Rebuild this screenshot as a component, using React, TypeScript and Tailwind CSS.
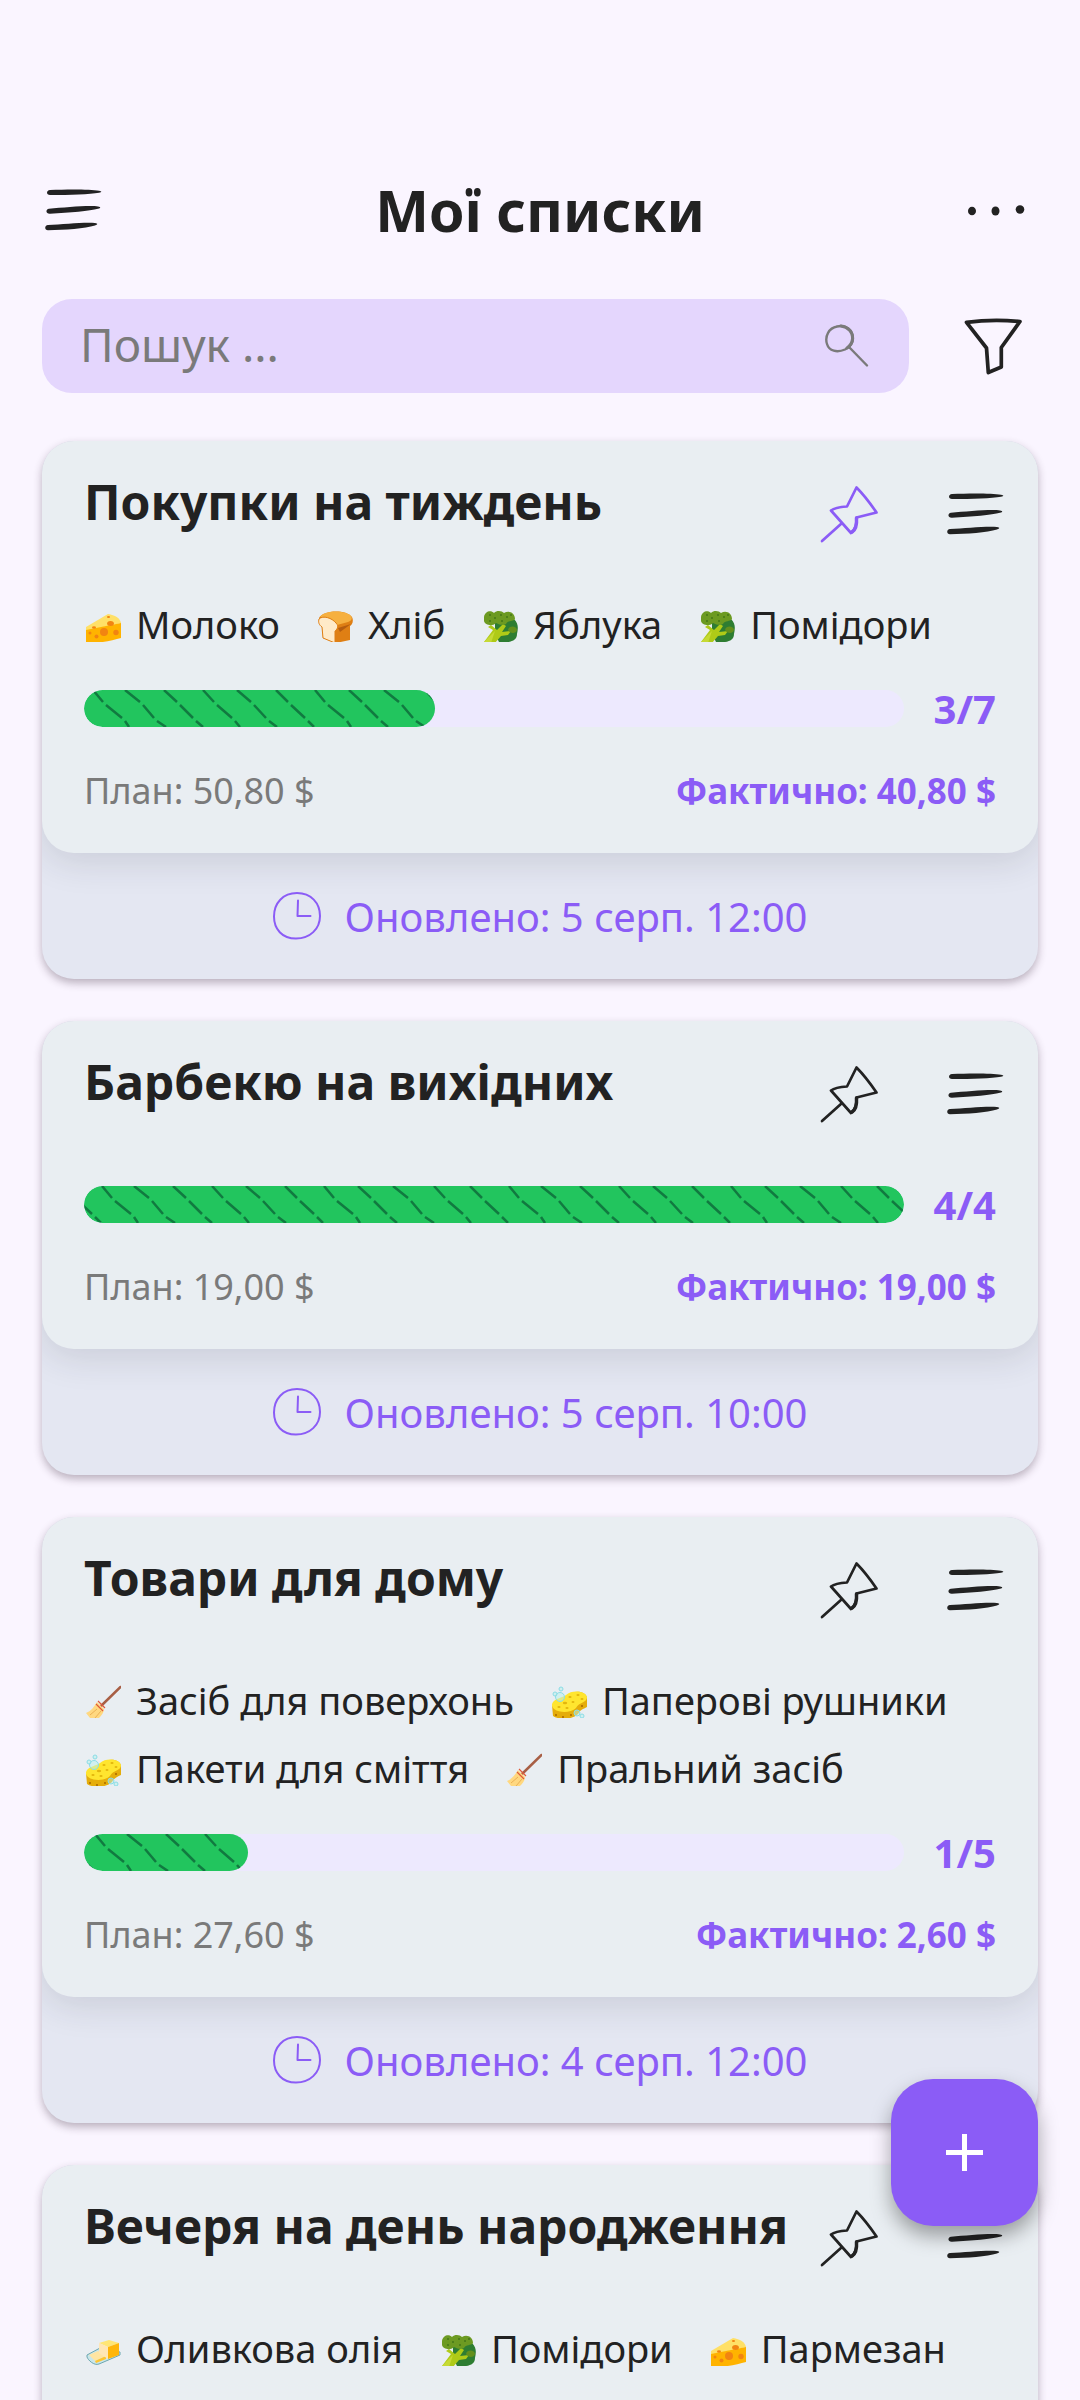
import type { ReactNode } from "react";

type FoodIcon = "cheese" | "bread" | "broccoli" | "broom" | "sponge" | "butter";

interface ListItem {
  icon: FoodIcon;
  name: string;
}

interface ListProgress {
  done: number;
  total: number;
  hatchStart: number;
  plan: string;
  actual: string;
  updated: string;
}

interface ShoppingList {
  title: string;
  pinned?: boolean;
  items: ListItem[];
  progress?: ListProgress;
}

const lists: ShoppingList[] = [
  {
    title: "Покупки на тиждень",
    pinned: true,
    items: [
      { icon: "cheese", name: "Молоко" },
      { icon: "bread", name: "Хліб" },
      { icon: "broccoli", name: "Яблука" },
      { icon: "broccoli", name: "Помідори" },
    ],
    progress: { done: 3, total: 7, hatchStart: 7, plan: "50,80 $", actual: "40,80 $", updated: "5 серп. 12:00" },
  },
  {
    title: "Барбекю на вихідних",
    items: [],
    progress: { done: 4, total: 4, hatchStart: 16, plan: "19,00 $", actual: "19,00 $", updated: "5 серп. 10:00" },
  },
  {
    title: "Товари для дому",
    items: [
      { icon: "broom", name: "Засіб для поверхонь" },
      { icon: "sponge", name: "Паперові рушники" },
      { icon: "sponge", name: "Пакети для сміття" },
      { icon: "broom", name: "Пральний засіб" },
    ],
    progress: { done: 1, total: 5, hatchStart: 9, plan: "27,60 $", actual: "2,60 $", updated: "4 серп. 12:00" },
  },
  {
    title: "Вечеря на день народження",
    items: [
      { icon: "butter", name: "Оливкова олія" },
      { icon: "broccoli", name: "Помідори" },
      { icon: "cheese", name: "Пармезан" },
    ],
  },
];

function MenuIcon() {
  return (
    <svg viewBox="0 0 57 42" className="w-[57px] h-[42px]" fill="currentColor" aria-hidden="true">
      <path d="M5 1C22 .3 45 .2 54 1.700C57 2.500 57 3 54 3.700C45 5.200 25 6 5 6C1 6 1 1.500 5 1Z" />
      <path d="M4 19.800C20 18.300 45 16 53 17.500C56 18 56 19 53 19.800C45 21.800 25 23.800 5 24.800C.5 25 .5 20.300 4 19.800Z" />
      <path d="M3 36C18 35.200 40 33 50 34C53 34.500 53 35.500 50 36.500C40 39.500 20 41 3 41.200C-.7 41 -.7 36.300 3 36Z" />
    </svg>
  );
}

function DotsIcon() {
  return (
    <svg viewBox="0 0 58 14" className="w-[58px] h-[14px]" fill="currentColor" aria-hidden="true">
      <ellipse cx="5" cy="8" rx="4" ry="4.300" />
      <ellipse cx="28.500" cy="8" rx="4" ry="4.500" />
      <ellipse cx="53" cy="6.500" rx="4.300" ry="4.200" />
    </svg>
  );
}

function SearchIcon() {
  return (
    <svg viewBox="0 0 46 44" className="w-[46px] h-[44px]" fill="none" stroke="currentColor" strokeLinecap="round" aria-hidden="true">
      <path d="M13 2.500C22 .5 29 6 29 14.500C29 20 26 23 21 25.500C13 29 5 27 3 20C.5 12 5 4 13 2.500" strokeWidth="2.400" />
      <path d="M17 2C24 3 29 8 28.500 15C28 20 26 22 23 24" strokeWidth="3" />
      <path d="M25.500 23.500L43 41.500" strokeWidth="2.400" />
    </svg>
  );
}

function FilterIcon() {
  return (
    <svg viewBox="0 -1 58 58" className="w-[58px] h-[58px]" fill="none" stroke="currentColor" strokeWidth="3.700" strokeLinejoin="round" aria-hidden="true">
      <path d="M2.500 4.300C18 2.300 40 2 56 3.500L37.300 29.500L37.300 49L24.300 54.500L22.500 30Z" />
    </svg>
  );
}

function PinIcon() {
  return (
    <svg viewBox="0 0 58 58" className="w-[58px] h-[58px]" fill="none" stroke="currentColor" strokeWidth="2.700" strokeLinejoin="round" strokeLinecap="round" aria-hidden="true">
      <path d="M36.500 2.500L27 21.500C20 22 15 22.500 11 25.500L31 48C35 45 37 40 36.500 32.500L56.500 27.500C50 18 44 10 36.500 2.500Z" />
      <path d="M36.500 33C37 40 35 45 32 47" strokeWidth="3.500" />
      <path d="M21.500 38.500L2 56" />
    </svg>
  );
}

function ClockIcon() {
  return (
    <svg viewBox="0 0 48 48" className="w-[48px] h-[48px]" fill="none" stroke="currentColor" strokeWidth="2" strokeLinecap="round" strokeLinejoin="round" aria-hidden="true">
      <path d="M24 1C38 1 47 11 47 24C47 37 37 46.500 23 46.500C9 46.500 1 37 1 24.500C1 11 10 1 24 1Z" />
      <path d="M25 8.500L24.500 24L37.500 24" />
    </svg>
  );
}

const foodDrawings: Record<FoodIcon, ReactNode> = {
  cheese: (
    <>
      <path d="M0 20L22 7C29 8 34 11 35 16L0 24Z" fill="#ffe067" />
      <path d="M0 23L35 16V31C28 33 18 35 10 36L0 36Z" fill="#ffb300" />
      <circle cx="18" cy="25" r="4" fill="#f28411" />
      <ellipse cx="24.500" cy="16.500" rx="3.400" ry="2.500" fill="#f28411" />
      <circle cx="30" cy="25.500" r="2.700" fill="#f28411" />
      <circle cx="10.500" cy="29.500" r="2" fill="#f28411" />
      <circle cx="4" cy="26" r="1.500" fill="#f28411" />
      <ellipse cx="8" cy="20.500" rx="2" ry="1.300" fill="#f28411" />
      <ellipse cx="22.500" cy="10" rx="1.600" ry="1" fill="#f28411" />
    </>
  ),
  bread: (
    <>
      <path d="M1 11C5 3 28 2 34 10C36 14 34 18 32 19L32 33L18 36L5 31L4 20Z" fill="#df7f14" />
      <path d="M2 10C7 3 27 3 33 9C35 12 33 14 30 15L19 18C15 13 7 10 2 10Z" fill="#f6b040" />
      <path d="M1 12C5 8 14 11 18 16C22 20 18 23 17 24L17 36L5 31L4 20C1 18 0 15 1 12Z" fill="#ffeac8" stroke="#df7f14" />
      <path d="M20 21L33 17L22 25Z" fill="#b55d10" />
    </>
  ),
  broccoli: (
    <>
      <path d="M12 13L31 12C36 17 35 22 34 27C34 34 27 36 16 35L12 27Z" fill="#2e7d32" />
      <path d="M1 35L10 23L5 20L8 18L14 23L20 17L23 19L19 25L28 24L25 28L18 29L12 36Z" fill="#afca17" />
      <path d="M1 35L12 24L8 36Z" fill="#c6da35" />
      <path d="M1 10C2 4 8 3 11 6C14 3 19 4 21 6C26 3 32 6 32 12C30 15 25 13 23 17C19 19 15 17 13 16C9 20 2 18 1 14Z" fill="#6c9a22" />
      <path d="M25 23C26 18 34 19 34 23C33 27 27 27 25 23Z" fill="#638f1c" />
      <path d="M6 8h2M11 11h2M17 8h2M23 10h2M6 14h2M18 14h2M27 8h2" stroke="#447817" strokeWidth="1.500" />
    </>
  ),
  broom: (
    <>
      <path d="M34.500 4L15 23" stroke="#a85f45" strokeWidth="2.500" strokeLinecap="round" />
      <path d="M11 19L18 26C18 30 15 33 12 36L4 35L0 30C5 28 8 24 11 19Z" fill="#ffd880" />
      <path d="M4 32L11 26M9 35L15 28" stroke="#eab055" strokeWidth="1" />
      <path d="M10 21L17 28M12 18L19 25" stroke="#df5939" strokeWidth="1.200" />
    </>
  ),
  sponge: (
    <>
      <path d="M0 22L14 14C22 6 34 8 35 15L35 24C31 26 28 27 26 31C20 37 7 37 1 33Z" fill="#e5ad0b" />
      <path d="M0 21C2 15 11 15 14 12C20 6 34 8 35 14C35 20 27 19 24 25C18 31 2 30 0 23Z" fill="#ffe52f" />
      <g fill="#e3b60d">
        <ellipse cx="18" cy="14" rx="1.600" ry="1" />
        <ellipse cx="26" cy="12" rx="1.600" ry="1" />
        <ellipse cx="30" cy="16" rx="1.500" ry="1" />
        <ellipse cx="13" cy="20" rx="2.200" ry="1.200" />
        <ellipse cx="21" cy="19" rx="1.500" ry="1" />
        <ellipse cx="7" cy="24" rx="1.600" ry="1" />
        <ellipse cx="15" cy="25" rx="1.600" ry="1" />
      </g>
      <path d="M4 31v2M11 33v2M19 31v2M30 22v2" stroke="#b87900" strokeWidth="2" />
      <g fill="#b8f0ec" fillOpacity=".5" stroke="#8bdde6">
        <circle cx="8" cy="14" r="4.500" />
        <circle cx="3" cy="11" r="2" />
        <circle cx="9" cy="6" r="2" />
        <circle cx="25" cy="30" r="3" />
        <circle cx="30" cy="33" r="2" />
      </g>
    </>
  ),
  butter: (
    <>
      <path d="M1 24L14 17L34 21V24L13 33C8 35 2 29 1 26Z" fill="#c9e6ea" stroke="#6da7b0" />
      <path d="M3 24L12 20L20 25L9 30Z" fill="#ffe5a2" />
      <path d="M9 30L20 25V28L10 32Z" fill="#ffc52e" />
      <path d="M13 12L23 9L33 12L22 16Z" fill="#ffe675" />
      <path d="M13 12L22 16V28L13 22Z" fill="#ffe6b4" />
      <path d="M22 16L33 12V24L22 28Z" fill="#ffb60a" />
    </>
  ),
};

function ItemChip({ icon, name }: ListItem) {
  return (
    <li className="flex items-center gap-[15px] pl-[2px]">
      <svg viewBox="0 0 35 35" className="w-[35px] h-[35px] shrink-0" fill="none" aria-hidden="true">
        {foodDrawings[icon]}
      </svg>
      <span className="text-[38px] leading-[53px] text-[#222222] whitespace-nowrap">{name}</span>
    </li>
  );
}

// How far each pencil stroke leans, so that the hatching looks hand made
const hatchLean = [0, -2, 3, 1, -1, 2, 0, -2, 1, 3, -1];

function ProgressBar({ done, total, hatchStart }: { done: number; total: number; hatchStart: number }) {
  return (
    <div
      role="progressbar"
      aria-label="Прогрес"
      aria-valuenow={done}
      aria-valuemax={total}
      className="flex-1 h-[37px] rounded-full bg-[#ede9fe] overflow-hidden"
    >
      <div className="h-full rounded-full bg-[#22c55e] overflow-hidden" style={{ width: `${(done / total) * 100}%` }}>
        <svg className="block w-full h-full" fill="none" stroke="#117a40" strokeWidth="2.500" aria-hidden="true">
          {Array.from({ length: 24 }, (_, i) => {
            const x = hatchStart + (i - 1) * 37;
            const k = hatchLean[i % hatchLean.length];
            return (
              <path
                key={i}
                d={`M${x - k} 0L${x + 12} 12M${x + 15} 15L${x + 29 - k} 28M${x + 32 - k} 31L${x + 38} 37`}
              />
            );
          })}
        </svg>
      </div>
    </div>
  );
}

function ListCard({ title, pinned, items, progress }: ShoppingList) {
  return (
    <article className="rounded-[32px] bg-[#e4e7f2] overflow-hidden shadow-[0_4px_8px_rgba(50,30,50,0.32)]">
      <div className="rounded-[32px] bg-[#e9eef2] pb-[42px] shadow-[0_8px_36px_rgba(40,40,60,0.14)]">
        <div className="flex items-start pt-[10px] pl-[42px] mb-[21px]">
          <h2 className="flex-1 min-w-0 pt-[19px] text-[48px] leading-[64px] font-bold text-[#222222] whitespace-nowrap">{title}</h2>
          <button
            type="button"
            aria-label="Закріпити"
            className={`flex items-center justify-center w-[126px] h-[126px] ${pinned ? "text-[#8b5cf6]" : "text-[#222222]"}`}
          >
            <PinIcon />
          </button>
          <button type="button" aria-label="Меню списку" className="flex items-center justify-center w-[126px] h-[126px] text-[#222222]">
            <MenuIcon />
          </button>
        </div>

        {items.length > 0 && (
          <ul className="flex flex-wrap gap-x-[36px] gap-y-[15px] px-[42px] mb-[31px]">
            {items.map((item, i) => (
              <ItemChip key={i} {...item} />
            ))}
          </ul>
        )}

        {progress && (
          <>
            <div className="flex items-center gap-[30px] px-[42px]">
              <ProgressBar done={progress.done} total={progress.total} hatchStart={progress.hatchStart} />
              <span className="text-[40px] leading-[53px] font-bold text-[#8b5cf6]">
                {progress.done}/{progress.total}
              </span>
            </div>
            <div className="flex items-center justify-between px-[42px] mt-9 leading-[40px]">
              <span className="text-[36px] text-[#7a7a7a]">План: {progress.plan}</span>
              <span className="text-[35px] font-bold text-[#8b5cf6]">Фактично: {progress.actual}</span>
            </div>
          </>
        )}
      </div>

      {progress && (
        <div className="flex items-center justify-center gap-6 h-[126px] text-[#8b5cf6]">
          <ClockIcon />
          <span className="text-[40px] leading-[53px]">Оновлено: {progress.updated}</span>
        </div>
      )}
    </article>
  );
}

export default function App() {
  return (
    <div className="h-screen overflow-hidden bg-[#faf5ff] font-['Noto_Sans',sans-serif]">
      <header className="flex items-center justify-between px-[42px] pt-[147px] text-[#222222]">
        <button type="button" aria-label="Меню" className="flex items-center h-[126px] w-[84px] pl-[3px]">
          <MenuIcon />
        </button>
        <h1 className="text-[57px] leading-[80px] font-bold">Мої списки</h1>
        <button type="button" aria-label="Більше" className="flex items-center justify-center h-[126px] w-[84px]">
          <DotsIcon />
        </button>
      </header>

      <div className="flex items-center pl-[42px] pr-6 mt-[26px]">
        <label className="flex flex-1 items-center h-[94px] rounded-[30px] bg-[#e4d6fd] pl-[38px] pr-[39px] text-[#7a7a7a]">
          <input
            type="text"
            aria-label="Пошук"
            placeholder="Пошук ..."
            className="flex-1 min-w-0 bg-transparent pb-1 text-[46px] leading-[60px] outline-none placeholder:text-[#7a7a7a]"
          />
          <SearchIcon />
        </label>
        <button type="button" aria-label="Фільтр" className="flex items-center justify-center w-[126px] h-[94px] ml-[21px] text-[#222222]">
          <FilterIcon />
        </button>
      </div>

      <main className="flex flex-col gap-[42px] px-[42px] mt-12">
        {lists.map((list) => (
          <ListCard key={list.title} {...list} />
        ))}
      </main>

      <button
        type="button"
        aria-label="Додати список"
        className="fixed right-[42px] bottom-[174px] flex items-center justify-center w-[147px] h-[147px] rounded-[42px] bg-[#8b5cf6] text-white shadow-[0_10px_20px_rgba(0,0,0,0.35)]"
      >
        <svg viewBox="0 0 37 37" className="w-[37px] h-[37px]" stroke="currentColor" strokeWidth="5" aria-hidden="true">
          <path d="M18.500 0V37M0 18.500H37" />
        </svg>
      </button>
    </div>
  );
}
